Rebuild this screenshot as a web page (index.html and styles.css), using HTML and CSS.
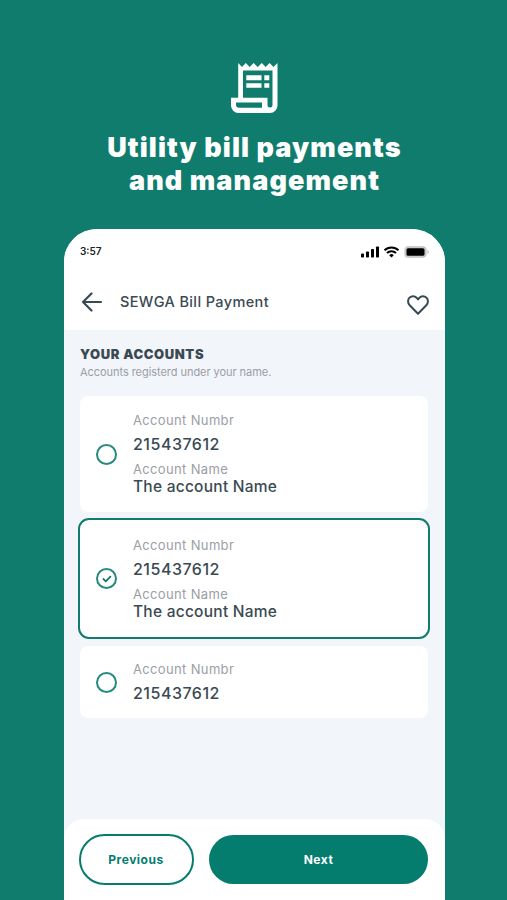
FILE: index.html
```html
<!DOCTYPE html>
<html lang="en">
<head>
    <meta charset="UTF-8">
    <meta name="viewport" content="width=device-width, initial-scale=1.0">
    <title>Utility bill payments</title>
    <link rel="stylesheet" href="styles.css">
</head>
<body>
    <div class="hero">
        <svg class="hero-icon" width="48" height="50" viewBox="0 0 48 50" fill="none">
            <path d="M8.200 0 L12 4 L15.800 0 L19.700 4 L23.600 0 L27.700 4 L31.800 0 L35.700 4 L39.600 0 L43.500 4 L47.500 0 V42.500 A7.500 7.500 0 0 1 40 50 H8.500 A7.500 7.500 0 0 1 1 42.500 V34.700 H8.200 Z" fill="#fff"/>
            <path d="M13 7.500 H42.500 V42 A2.500 2.500 0 0 1 37.500 42 V34.700 H13 Z" fill="#107c6e"/>
            <path d="M6 39.500 H32 V44.800 H9 A3 3 0 0 1 6 42 Z" fill="#107c6e"/>
            <path d="M16.300 12.200 H31.500 V17.200 H16.300 Z M34.300 12.200 H39.300 V17.200 H34.300 Z M16.300 20.200 H31.500 V24.800 H16.300 Z M34.300 20.200 H39.300 V24.800 H34.300 Z" fill="#fff"/>
        </svg>
        <h1>Utility bill payments<br>and management</h1>
    </div>

    <div class="phone">
        <div class="status-bar">
            <span class="time">3:57</span>
            <svg width="68" height="12" viewBox="0 0 68 12">
                <g fill="#000">
                    <rect x="0" y="7.500" width="3" height="4" rx="0.800"/>
                    <rect x="5" y="5.500" width="3" height="6" rx="0.800"/>
                    <rect x="10" y="3" width="3" height="8.500" rx="0.800"/>
                    <rect x="15" y="0.500" width="3" height="11" rx="0.800"/>
                </g>
                <g fill="none" stroke="#000" stroke-width="2">
                    <path d="M23.500 4.300 A10 10 0 0 1 37.500 4.300"/>
                    <path d="M26 7 A6.400 6.400 0 0 1 35 7"/>
                </g>
                <path d="M30.500 11.500 L28.200 9.200 A3.300 3.300 0 0 1 32.800 9.200 Z" fill="#000"/>
                <rect x="44" y="0.800" width="21" height="10.400" rx="3.200" fill="#ccc" stroke="#c4c4c4" stroke-width="1.200"/>
                <rect x="45.500" y="2.200" width="18" height="7.600" rx="1.600" fill="#000"/>
                <path d="M66.500 4 A2.200 2.200 0 0 1 66.500 8 Z" fill="#b5b5b5"/>
            </svg>
        </div>

        <div class="app-bar">
            <svg class="back" width="22" height="20" viewBox="0 0 22 20" fill="none" stroke="#3a4a53" stroke-width="2.200" stroke-linecap="round" stroke-linejoin="round">
                <path d="M20 10 H2 M10.500 1.500 L2 10 L10.500 18.500"/>
            </svg>
            <span class="title">SEWGA Bill Payment</span>
            <svg class="heart" width="22" height="20" viewBox="0 0 22 20" fill="none" stroke="#3a4a53" stroke-width="2" stroke-linejoin="round">
                <path d="M11 18.700 L2.700 10.200 C0.500 7.900 0.500 4.400 2.700 2.500 C4.900 0.500 8.200 0.800 10 3.100 L11 4.400 L12 3.100 C13.800 0.800 17.100 0.500 19.300 2.500 C21.500 4.400 21.500 7.900 19.300 10.200 Z"/>
            </svg>
        </div>

        <div class="content">
            <h2>YOUR ACCOUNTS</h2>
            <p class="hint">Accounts registerd under your name.</p>

            <div class="account">
                <span class="radio"></span>
                <div class="details">
                    <div class="label">Account Numbr</div>
                    <div class="number">215437612</div>
                    <div class="label">Account Name</div>
                    <div class="name">The account Name</div>
                </div>
            </div>

            <div class="account selected">
                <span class="radio">
                    <svg width="10" height="8" viewBox="0 0 10 8" fill="none" stroke="#107c6e" stroke-width="1.800" stroke-linecap="round" stroke-linejoin="round">
                        <path d="M1.400 4 L3.800 6.300 L8.400 1.700"/>
                    </svg>
                </span>
                <div class="details">
                    <div class="label">Account Numbr</div>
                    <div class="number">215437612</div>
                    <div class="label">Account Name</div>
                    <div class="name">The account Name</div>
                </div>
            </div>

            <div class="account short">
                <span class="radio"></span>
                <div class="details">
                    <div class="label">Account Numbr</div>
                    <div class="number">215437612</div>
                </div>
            </div>
        </div>

        <div class="footer">
            <button class="btn btn-outline">Previous</button>
            <button class="btn btn-primary">Next</button>
        </div>
    </div>
</body>
</html>
```

FILE: styles.css
```css
:root {
    --background-color: #107c6e;
    --primary-color: #047d6f;
    --surface-color: #f2f5f9;
    --text-color: #3a4a53;
    --muted-color: #9a9ea6;
}

* {
    box-sizing: border-box;
}

body {
    font-family: 'Inter', sans-serif;
    margin: 0;
    height: 900px;
    display: flex;
    flex-direction: column;
    background-color: var(--background-color);
    color: var(--text-color);
    overflow: hidden;
}

.hero {
    height: 229px;
    flex: none;
    padding-top: 63px;
    display: flex;
    flex-direction: column;
    align-items: center;
}

.hero-icon {
    display: block;
}

h1 {
    margin: 18px 0 0 2px;
    font-size: 27px;
    font-weight: 900;
    line-height: 33px;
    letter-spacing: 1.1px;
    text-align: center;
    color: #fff;
}

.phone {
    flex: 1;
    width: 381px;
    margin-left: 64px;
    display: flex;
    flex-direction: column;
    background-color: var(--surface-color);
    border-radius: 33px 33px 0 0;
    overflow: hidden;
}

.status-bar {
    height: 44px;
    padding: 1px 16px 0 16px;
    display: flex;
    align-items: center;
    justify-content: space-between;
    background-color: #fff;
}

.time {
    margin-top: -2px;
    font-size: 10px;
    font-weight: 600;
    color: #222;
}

.app-bar {
    height: 57px;
    padding: 0 16px 0 17px;
    display: flex;
    align-items: center;
    background-color: #fff;
}

.title {
    flex: 1;
    margin: -1px 0 0 17px;
    font-size: 14.5px;
    font-weight: 500;
    letter-spacing: 0.38px;
}

.heart {
    margin-top: 7px;
}

.content {
    flex: 1;
    padding: 16px 17px 0 16px;
}

h2 {
    margin: 0;
    font-size: 13px;
    font-weight: 900;
    line-height: 17px;
    letter-spacing: 0.6px;
}

.hint {
    margin: 0 0 15px;
    font-size: 11px;
    line-height: 18px;
    letter-spacing: -0.05px;
    color: var(--muted-color);
}

.account {
    height: 116px;
    padding: 0 16px;
    display: flex;
    align-items: center;
    background-color: #fff;
    border-radius: 8px;
}

.account.selected {
    height: 121px;
    margin: 6px -2px 7px;
    border: 2px solid var(--background-color);
    border-radius: 11px;
}

.account.short {
    height: 72px;
}

.radio {
    width: 21px;
    height: 21px;
    margin-right: 16px;
    display: flex;
    align-items: center;
    justify-content: center;
    border: 2px solid #258a7d;
    border-radius: 50%;
}

.details {
    padding-bottom: 6px;
}

.selected .details {
    padding-bottom: 5px;
}

.short .details {
    padding-bottom: 0;
}

.label {
    font-size: 13px;
    line-height: 22px;
    letter-spacing: 0.35px;
    color: var(--muted-color);
}

.number {
    font-size: 16px;
    font-weight: 500;
    line-height: 27px;
    letter-spacing: 0.5px;
}

.name {
    font-size: 15.5px;
    font-weight: 500;
    line-height: 14px;
    letter-spacing: 0.25px;
}

.footer {
    height: 81px;
    padding: 15px 17px 0 15px;
    display: flex;
    background-color: #fff;
    border-radius: 20px 20px 0 0;
}

.btn {
    font-family: inherit;
    font-size: 12px;
    font-weight: 700;
    letter-spacing: 0.5px;
    border-radius: 26px;
    cursor: pointer;
}

.btn-outline {
    width: 115px;
    height: 51px;
    padding: 0 7px 0 6px;
    margin-right: 15px;
    border: 2px solid var(--primary-color);
    background-color: #fff;
    color: var(--primary-color);
}

.btn-primary {
    flex: 1;
    height: 49px;
    margin-top: 1px;
    border: none;
    background-color: var(--primary-color);
    color: #fff;
}
```
